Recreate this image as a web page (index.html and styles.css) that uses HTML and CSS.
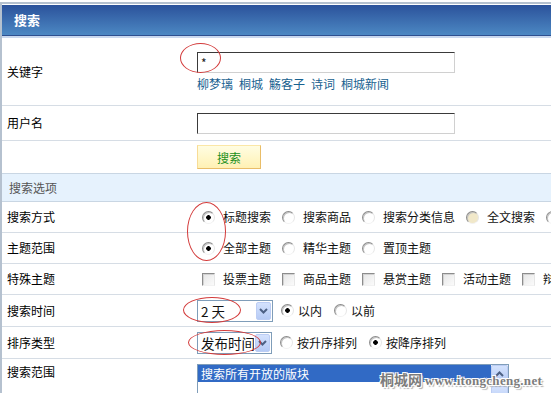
FILE: index.html
```html
<!DOCTYPE html>
<html lang="zh-CN">
<head>
    <meta charset="UTF-8">
    <meta name="viewport" content="width=device-width, initial-scale=1.0">
    <title>搜索</title>
    <link rel="stylesheet" href="styles.css">
</head>
<body>
    <div class="page">
        <div class="title">搜索</div>

        <div class="row row-keyword">
            <div class="label">关键字</div>
            <div class="field">
                <input class="text" type="text" value="*">
                <div class="hot">
                    <a href="#">柳梦璃</a><a href="#">桐城</a><a href="#">觞客子</a><a href="#">诗词</a><a href="#">桐城新闻</a>
                </div>
            </div>
        </div>

        <div class="row row-user">
            <div class="label">用户名</div>
            <div class="field"><input class="text" type="text"></div>
        </div>

        <div class="row row-button">
            <div class="label"></div>
            <div class="field"><button type="button" class="btn">搜索</button></div>
        </div>

        <div class="section">搜索选项</div>

        <div class="row row-opt">
            <div class="label">搜索方式</div>
            <div class="opts">
                <label class="opt"><input type="radio" name="mode" checked><span>标题搜索</span></label>
                <label class="opt"><input type="radio" name="mode"><span>搜索商品</span></label>
                <label class="opt"><input type="radio" name="mode"><span>搜索分类信息</span></label>
                <label class="opt"><input type="radio" name="mode" class="hover"><span>全文搜索</span></label>
                <label class="opt"><input type="radio" name="mode"><span>搜索用户</span></label>
            </div>
        </div>

        <div class="row row-opt">
            <div class="label">主题范围</div>
            <div class="opts">
                <label class="opt"><input type="radio" name="range" checked><span>全部主题</span></label>
                <label class="opt"><input type="radio" name="range"><span>精华主题</span></label>
                <label class="opt"><input type="radio" name="range"><span>置顶主题</span></label>
            </div>
        </div>

        <div class="row row-opt">
            <div class="label">特殊主题</div>
            <div class="opts">
                <label class="opt"><input type="checkbox"><span>投票主题</span></label>
                <label class="opt"><input type="checkbox"><span>商品主题</span></label>
                <label class="opt"><input type="checkbox"><span>悬赏主题</span></label>
                <label class="opt"><input type="checkbox"><span>活动主题</span></label>
                <label class="opt"><input type="checkbox"><span>辩论主题</span></label>
            </div>
        </div>

        <div class="row row-opt row-tall">
            <div class="label">搜索时间</div>
            <div class="opts">
                <div class="combo combo-time">
                    <select class="sel"><option>2 天</option></select>
                    <span class="drop"><svg width="9" height="6" viewBox="0 0 9 6"><path d="M1 1 L4.5 4.5 L8 1" fill="none" stroke="#4d6185" stroke-width="2"/></svg></span>
                </div>
                <label class="opt tight"><input type="radio" name="when" checked><span>以内</span></label>
                <label class="opt tight"><input type="radio" name="when"><span>以前</span></label>
            </div>
        </div>

        <div class="row row-opt row-tall">
            <div class="label">排序类型</div>
            <div class="opts">
                <div class="combo combo-order">
                    <select class="sel"><option>发布时间</option></select>
                    <span class="drop"><svg width="9" height="6" viewBox="0 0 9 6"><path d="M1 1 L4.5 4.5 L8 1" fill="none" stroke="#4d6185" stroke-width="2"/></svg></span>
                </div>
                <label class="opt tight"><input type="radio" name="order"><span>按升序排列</span></label>
                <label class="opt tight"><input type="radio" name="order" checked><span>按降序排列</span></label>
            </div>
        </div>

        <div class="row row-last">
            <div class="label">搜索范围</div>
            <div class="listbox">
                <div class="lb-items">
                    <div class="lb-item selected">搜索所有开放的版块</div>
                </div>
                <div class="lb-scroll">
                    <span class="lb-btn"><svg width="9" height="6" viewBox="0 0 9 6"><path d="M1 5 L4.5 1.5 L8 5" fill="none" stroke="#4d6185" stroke-width="2"/></svg></span>
                    <span class="lb-track"></span>
                    <span class="lb-btn"></span>
                </div>
            </div>
        </div>

        <!-- red marks drawn over the shot -->
        <span class="mark mark-keyword"></span>
        <span class="mark mark-radios"></span>
        <span class="mark mark-time"></span>
        <span class="mark mark-order"></span>

        <div class="watermark"><span class="wm-cn">桐城网</span> <span class="wm-en">www.itongcheng.net</span></div>
    </div>
</body>
</html>
```

FILE: styles.css
```css
* {
    box-sizing: border-box;
}
html, body {
    margin: 0;
    overflow: hidden;
}
body {
    font-family: "Noto Sans CJK SC", sans-serif;
    font-size: 12px;
    color: #111;
    background: #fff;
}
.page {
    position: relative;
    width: 820px;
    margin-top: 2px;
    padding-top: 1px;
    border-top: 2px solid #b5c1cf;
    border-left: 2px solid #b5c1cf;
}
.title {
    height: 31px;
    margin-bottom: 2px;
    padding-left: 12px;
    background: linear-gradient(#2b529b, #4c88c3);
    border-bottom: 1px solid #2e5090;
    box-shadow: 0 2px 0 #c9d8ef;
    color: #fff;
    font-size: 13px;
    font-weight: bold;
    line-height: 30px;
}
.row {
    display: grid;
    grid-template-columns: 195px 1fr;
    align-items: center;
    border-bottom: 1px solid #d6dde5;
}
.label {
    padding-left: 5px;
    color: #000;
    line-height: 16px;
}
.row-keyword {
    height: 68px;
}
.row-user {
    height: 35px;
}
.row-button {
    height: 33px;
    border-bottom-color: #c9d6e3;
}
.row-opt {
    height: 31px;
}
.row-tall {
    height: 32px;
}
.row-last {
    height: 70px;
    align-items: start;
    border-bottom: none;
}
.row-last .label {
    padding-top: 5px;
}
.text {
    display: block;
    width: 258px;
    height: 21px;
    margin: 0;
    padding: 0 3px;
    border: 1px solid;
    border-color: #3a3a3a #d0d0d0 #d0d0d0 #3a3a3a;
    font-family: inherit;
    font-size: 12px;
    color: #222;
    outline: none;
}
.hot {
    margin-top: 3px;
    line-height: 16px;
}
.hot a {
    margin-right: 6px;
    color: #17618f;
    text-decoration: none;
}
.btn {
    width: 64px;
    height: 24px;
    margin: 0;
    padding: 0;
    border: 1px solid;
    border-color: #fbe7a6 #e9bd68 #e9bd68 #f8dc96;
    background: linear-gradient(#fffde2, #fff1b4);
    color: #23901b;
    font-family: inherit;
    font-size: 12px;
}
.section {
    height: 28px;
    padding-left: 7px;
    background: #e6f2fd;
    border-bottom: 1px solid #c9d6e3;
    color: #555;
    line-height: 27px;
}
.opts {
    display: flex;
    align-items: center;
    white-space: nowrap;
}
.opt {
    display: flex;
    align-items: center;
    margin-right: 6px;
    line-height: 16px;
}
.opt input {
    appearance: none;
    -webkit-appearance: none;
    flex: none;
    width: 13px;
    height: 13px;
    margin: 0 8px 0 5px;
    border: 1px solid;
    border-color: #8c8c8c #e6e6e6 #f2f2f2 #8c8c8c;
    background: #fff;
}
.opt input[type="radio"] {
    border-radius: 50%;
    box-shadow: inset 1px 1px 0 #c4c4c4;
}
.opt input[type="radio"]:checked {
    background: radial-gradient(circle, #000 0 2px, transparent 2.6px), #fff;
}
.opt input.hover {
    background: #f1e8c9;
}
.opt input[type="checkbox"] {
    background: linear-gradient(135deg, #e6e6e6, #fbfbfb);
    box-shadow: inset 1px 1px 0 #d2d2d2;
}
.row-opt:first-of-type .opt {
    margin-right: 5px;
}
.opt.tight input {
    margin-right: 4px;
}
.opt.tight {
    margin-right: 7px;
}
.combo {
    display: flex;
    height: 22px;
    margin-right: 3px;
    border: 1px solid #7f9db9;
    background: #fff;
}
.combo-time {
    width: 76px;
}
.combo-order {
    width: 75px;
}
.sel {
    appearance: none;
    -webkit-appearance: none;
    flex: 1;
    min-width: 0;
    margin: 0;
    padding: 0 0 0 3px;
    border: none;
    background: transparent;
    font-family: inherit;
    font-size: 13.5px;
    color: #111;
    outline: none;
}
.drop {
    display: flex;
    align-items: center;
    justify-content: center;
    flex: none;
    width: 15px;
    margin: 1px;
    border: 1px solid #bccdf4;
    border-radius: 2px;
    background: linear-gradient(#d4e2fd, #b6cbf5);
}
.listbox {
    display: flex;
    width: 312px;
    height: 60px;
    margin-top: 5px;
    border: 1px solid #7f9db9;
    background: #fff;
}
.lb-items {
    flex: 1;
}
.lb-item {
    height: 17px;
    padding-left: 3px;
    line-height: 17px;
}
.lb-item.selected {
    background: #316ac5;
    color: #fff;
}
.lb-scroll {
    display: flex;
    flex-direction: column;
    width: 17px;
    background: #f3f3ef;
}
.lb-btn {
    display: flex;
    align-items: center;
    justify-content: center;
    height: 17px;
    border: 1px solid #bccdf4;
    border-radius: 2px;
    background: linear-gradient(#d4e2fd, #b6cbf5);
}
.lb-track {
    height: 4px;
}
.mark {
    position: absolute;
    border: 1px solid #d33b3b;
    border-radius: 50%;
}
.mark-keyword {
    left: 178px;
    top: 39px;
    width: 41px;
    height: 30px;
}
.mark-radios {
    left: 185px;
    top: 198px;
    width: 39px;
    height: 59px;
}
.mark-time {
    left: 181px;
    top: 293px;
    width: 58px;
    height: 26px;
}
.mark-order {
    left: 186px;
    top: 326px;
    width: 73px;
    height: 25px;
}
.watermark {
    position: absolute;
    left: 378px;
    top: 365px;
    color: #7c7c7c;
    font-weight: bold;
    white-space: nowrap;
    text-shadow: 1px 1px 0 #fff, -1px -1px 0 #fff, 1px -1px 0 #fff, -1px 1px 0 #fff, 2px 2px 1px #b0b0b0;
}
.wm-cn {
    font-size: 14px;
}
.wm-en {
    font-family: "Liberation Serif", serif;
    font-size: 13px;
    letter-spacing: 0.3px;
}
```
